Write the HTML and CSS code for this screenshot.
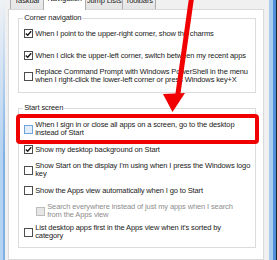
FILE: index.html
```html
<!DOCTYPE html>
<html lang="en">
<head>
  <meta charset="UTF-8" />
  <title>Taskbar and Navigation properties</title>
  <link rel="stylesheet" href="styles.css">
</head>
<body>

  <div class="window">
    <div class="frame-left"></div>

    <div class="dialog">
      <div class="tabs">
        <div class="tab tab-taskbar">Taskbar</div>
        <div class="tab tab-nav selected">Navigation</div>
        <div class="tab tab-jump">Jump Lists</div>
        <div class="tab tab-tool">Toolbars</div>
      </div>

      <div class="panel">
        <!-- Corner navigation -->
        <fieldset class="group corner">
          <legend>Corner navigation</legend>
          <label class="row r-first">
            <span class="box"><svg viewBox="0 0 7 7"><path d="M0.8 3.4 L2.7 5.3 L6.2 1.2"/></svg></span>
            <span class="text">When I point to the upper-right corner, show the charms</span>
          </label>
          <label class="row r-wide">
            <span class="box"><svg viewBox="0 0 7 7"><path d="M0.8 3.4 L2.7 5.3 L6.2 1.2"/></svg></span>
            <span class="text">When I click the upper-left corner, switch between my recent apps</span>
          </label>
          <label class="row">
            <span class="box"></span>
            <span class="text">Replace Command Prompt with Windows PowerShell in the menu<br>when I right-click the lower-left corner or press Windows key+X</span>
          </label>
        </fieldset>

        <!-- Start screen -->
        <fieldset class="group start">
          <legend>Start screen</legend>
          <label class="row r-first">
            <span class="box hover"></span>
            <span class="text">When I sign in or close all apps on a screen, go to the desktop<br>instead of Start</span>
          </label>
          <label class="row">
            <span class="box"><svg viewBox="0 0 7 7"><path d="M0.8 3.4 L2.7 5.3 L6.2 1.2"/></svg></span>
            <span class="text">Show my desktop background on Start</span>
          </label>
          <label class="row">
            <span class="box"></span>
            <span class="text">Show Start on the display I'm using when I press the Windows logo<br>key</span>
          </label>
          <label class="row">
            <span class="box"></span>
            <span class="text">Show the Apps view automatically when I go to Start</span>
          </label>
          <label class="row sub disabled">
            <span class="box"></span>
            <span class="text">Search everywhere instead of just my apps when I search<br>from the Apps view</span>
          </label>
          <label class="row r-tight">
            <span class="box"></span>
            <span class="text">List desktop apps first in the Apps view when it’s sorted by<br>category</span>
          </label>
        </fieldset>
      </div>
    </div>

    <div class="frame-right">
      <span class="edge-light"></span>
      <span class="edge-blue"></span>
      <span class="edge-dark"></span>
    </div>
  </div>

  <!-- red annotation drawn over the dialog -->
  <svg class="annotation" viewBox="0 0 277 260">
    <line x1="191.5" y1="-2" x2="177.5" y2="97" />
    <polygon points="163,94 185,93 172.5,112" />
    <rect x="18" y="116" width="239" height="26" rx="2" />
  </svg>

</body>
</html>
```

FILE: styles.css
```css
* {
  box-sizing: border-box;
  margin: 0;
  padding: 0;
}

body {
  width: 277px;
  height: 260px;
  overflow: hidden;
  background: #f0f0f0;
  font-family: "Liberation Sans", Arial, sans-serif;
  font-size: 7.5px;
  line-height: 8px;
  letter-spacing: -0.12px;
  color: #1a1a1a;
}

.window {
  display: flex;
  height: 260px;
}

.frame-left {
  width: 6px;
  background:
    linear-gradient(to bottom, #eef1f5 0, rgba(238, 241, 245, 0) 60%),
    linear-gradient(to right, #b4d2f1 0 3px, #7eb0e6 3px 6px);
}

.dialog {
  flex: 1;
  display: flex;
  flex-direction: column;
  padding: 0 5px 0 3px;
}

.frame-right {
  width: 9px;
  display: flex;
}

.edge-light {
  width: 4px;
  background: #a9cbef;
}

.edge-blue {
  width: 3px;
  background: #4f8fdb;
}

.edge-dark {
  flex: 1;
  background: #1b2230;
}

/* tabs */
.tabs {
  height: 9px;
  display: flex;
  align-items: flex-end;
  padding-left: 2px;
  position: relative;
  z-index: 1;
}

.tab {
  height: 18px;
  display: flex;
  align-items: flex-end;
  justify-content: center;
  padding-bottom: 4px;
  border: 1px solid #acacac;
  border-bottom: none;
  background: linear-gradient(#f0f0f0, #e5e5e5);
  white-space: nowrap;
}

.tab-taskbar { width: 34px; }
.tab-jump { width: 38px; margin-left: -1px; }
.tab-tool { width: 34px; margin-left: -1px; }

.tab.selected {
  width: 43px;
  height: 21px;
  margin: 0 0 -1px -1px;
  padding-bottom: 7px;
  background: #fff;
}

.panel {
  flex: 1;
  background: #fff;
  border: 1px solid #d9d9d9;
  padding: 0 7px 0 9px;
}

/* group boxes */
.group {
  border: 1px solid #dcdcdc;
  padding: 0 5px;
}

.group legend {
  padding: 0 1px;
  margin-left: -1px;
  line-height: 8px;
}

.corner {
  margin-top: 4px;
  padding-bottom: 8px;
}

.start {
  margin-top: 11px;
  padding-bottom: 7px;
}

.row {
  display: flex;
  align-items: center;
  gap: 2px;
  margin-top: 8px;
  white-space: nowrap;
}

.corner .r-first { margin-top: 7px; }
.start .r-first { margin-top: 9px; }
.r-wide { margin-top: 13px; }
.r-tight { margin-top: 5px; }

.row .text {
  min-height: 9px;
  display: flex;
  align-items: center;
}

.box {
  width: 9px;
  height: 9px;
  flex-shrink: 0;
  border: 1px solid #4d4d4d;
  background: #fff;
  display: flex;
  align-items: center;
  justify-content: center;
}

.box svg {
  width: 7px;
  height: 7px;
}

.box path {
  fill: none;
  stroke: #1a1a1a;
  stroke-width: 1.4;
}

.box.hover {
  border-color: #6fa3dc;
  background: #e2eefb;
}

.sub {
  margin-left: 12px;
}

.disabled {
  color: #8d8d8d;
}

.disabled .box {
  border-color: #bcbcbc;
  background: #e6e6e6;
}

/* red annotation */
.annotation {
  position: absolute;
  top: 0;
  left: 0;
  width: 277px;
  height: 260px;
  pointer-events: none;
}

.annotation line {
  stroke: #f00000;
  stroke-width: 5;
}

.annotation polygon {
  fill: #f00000;
}

.annotation rect {
  fill: none;
  stroke: #f00000;
  stroke-width: 4;
}
```
